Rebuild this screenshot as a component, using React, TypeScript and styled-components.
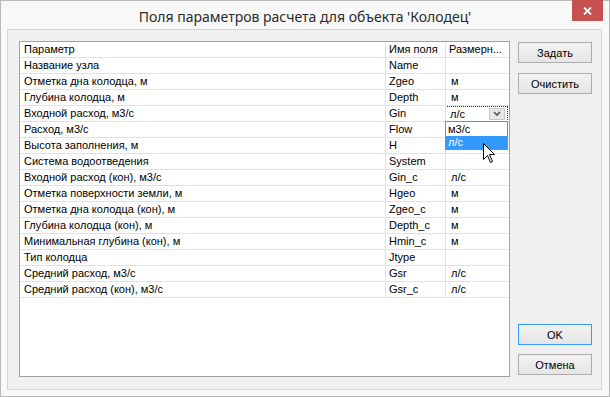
import React from "react";
import styled, { createGlobalStyle } from "styled-components";

const Global = createGlobalStyle`
  html, body { margin: 0; padding: 0; background: #ffffff; }
  body { font-family: "Liberation Sans", Arial, sans-serif; }
`;

const Window = styled.div`
  position: relative;
  width: 610px;
  height: 397px;
  box-sizing: border-box;
  border: 1px solid #b9b9b9;
  background: #f8f8f8;
  display: flex;
  flex-direction: column;
`;

const TitleBar = styled.div`
  height: 28px;
  display: flex;
  align-items: center;
  justify-content: center;
  position: relative;
`;

const Title = styled.div`
  font-family: "Noto Sans", "Open Sans", sans-serif;
  font-size: 14px;
  color: #2a2a2a;
  margin-top: 2px;
`;

const CloseButton = styled.div`
  position: absolute;
  right: 6px;
  top: -1px;
  width: 31px;
  height: 21px;
  background: #c75050;
  color: #fff;
  display: flex;
  align-items: center;
  justify-content: center;
`;

const Client = styled.div`
  margin: 0 7px 6px 6px;
  flex: 1;
  border: 1px solid #d6d6d6;
  background: #f0f0f0;
  display: flex;
  padding: 11px 9px 12px 11px;
  gap: 8px;
`;

const Grid = styled.div`
  position: relative;
  width: 491px;
  box-sizing: border-box;
  border: 1px solid #a0a0a0;
  background: #fff;
  display: flex;
  flex-direction: column;
`;

const Row = styled.div<{ $header?: boolean }>`
  display: grid;
  grid-template-columns: 366px 60px 1fr;
  height: 16px;
  box-sizing: border-box;
  border-bottom: 1px solid #e2e2e2;
  font-size: 11px;
  color: #000;
`;

const Cell = styled.div<{ $pad: number; $last?: boolean }>`
  padding-left: ${(p) => p.$pad}px;
  border-right: ${(p) => (p.$last ? "none" : "1px solid #e2e2e2")};
  line-height: 15px;
  white-space: nowrap;
  overflow: hidden;
  text-overflow: ellipsis;
  position: relative;
`;

const ComboCell = styled.div`
  position: absolute;
  left: -1px;
  right: 1px;
  top: 0;
  bottom: -1px;
  border: 1px dotted #333;
  display: flex;
  align-items: center;
  padding-left: 4px;
  box-sizing: border-box;
`;

const ComboArrow = styled.div`
  position: absolute;
  right: 2px;
  top: 1px;
  width: 16px;
  height: 12px;
  background: #e6e6e6;
  border: 1px solid #c8c8c8;
  box-sizing: border-box;
  display: flex;
  align-items: center;
  justify-content: center;
`;

const DropList = styled.div`
  position: absolute;
  left: 425px;
  top: 79px;
  width: 63px;
  height: 29px;
  box-sizing: border-box;
  border: 1px solid #8a8a8a;
  background: #fff;
  font-size: 11px;
  display: flex;
  flex-direction: column;
  padding-top: 1px;
`;

const DropItem = styled.div<{ $selected?: boolean }>`
  height: 13px;
  line-height: 13px;
  padding-left: 2px;
  background: ${(p) => (p.$selected ? "#3399ff" : "transparent")};
  color: ${(p) => (p.$selected ? "#fff" : "#000")};
`;

const Cursor = styled.svg`
  position: absolute;
  left: 463px;
  top: 101px;
`;

const Buttons = styled.div`
  width: 74px;
  display: flex;
  flex-direction: column;
  justify-content: space-between;
  padding-top: 1px;
  padding-bottom: 2px;
`;

const Group = styled.div<{ $gap: number }>`
  display: flex;
  flex-direction: column;
  gap: ${(p) => p.$gap}px;
`;

const Button = styled.div<{ $default?: boolean }>`
  height: 21px;
  box-sizing: border-box;
  border: 1px solid ${(p) => (p.$default ? "#3399ff" : "#adadad")};
  background: linear-gradient(#f2f2f2, #e5e5e5);
  font-size: 11px;
  display: flex;
  align-items: center;
  justify-content: center;
  color: #000;
`;

type R = [string, string, string];
const rows: R[] = [
  ["Название узла", "Name", ""],
  ["Отметка дна колодца, м", "Zgeo", "м"],
  ["Глубина колодца, м", "Depth", "м"],
  ["Входной расход, м3/с", "Gin", "л/с"],
  ["Расход, м3/с", "Flow", "м3/с"],
  ["Высота заполнения, м", "H", ""],
  ["Система водоотведения", "System", ""],
  ["Входной расход (кон), м3/с", "Gin_c", "л/с"],
  ["Отметка поверхности земли, м", "Hgeo", "м"],
  ["Отметка дна колодца (кон), м", "Zgeo_c", "м"],
  ["Глубина колодца (кон), м", "Depth_c", "м"],
  ["Минимальная глубина (кон), м", "Hmin_c", "м"],
  ["Тип колодца", "Jtype", ""],
  ["Средний расход, м3/с", "Gsr", "л/с"],
  ["Средний расход (кон), м3/с", "Gsr_c", "л/с"],
];

export default function App() {
  return (
    <>
      <Global />
      <Window>
        <TitleBar>
          <Title>Поля параметров расчета для объекта 'Колодец'</Title>
          <CloseButton>
            <svg width="9" height="8" viewBox="0 0 9 8">
              <path d="M1 0.5 L8 7.5 M8 0.5 L1 7.5" stroke="#fff" strokeWidth="1.8" />
            </svg>
          </CloseButton>
        </TitleBar>
        <Client>
          <Grid>
            <Row $header>
              <Cell $pad={4}>Параметр</Cell>
              <Cell $pad={3}>Имя поля</Cell>
              <Cell $pad={3} $last>Размерн...</Cell>
            </Row>
            {rows.map((r, i) => (
              <Row key={i}>
                <Cell $pad={4}>{r[0]}</Cell>
                <Cell $pad={3}>{r[1]}</Cell>
                <Cell $pad={5} $last>
                  {i === 3 ? (
                    <ComboCell>
                      л/с
                      <ComboArrow>
                        <svg width="8" height="6" viewBox="0 0 8 6">
                          <path d="M1 1 L4 4 L7 1" stroke="#555" strokeWidth="1.6" fill="none" />
                        </svg>
                      </ComboArrow>
                    </ComboCell>
                  ) : i === 4 ? (
                    ""
                  ) : (
                    r[2]
                  )}
                </Cell>
              </Row>
            ))}
            <DropList>
              <DropItem>м3/с</DropItem>
              <DropItem $selected>л/с</DropItem>
            </DropList>
            <Cursor width="13" height="21" viewBox="0 0 13 21">
              <path
                d="M0.5 0.5 L0.5 16.5 L4.5 12.5 L7.5 19.5 L9.5 18.5 L6.5 11.5 L11.5 11.5 Z"
                fill="#fff"
                stroke="#000"
                strokeWidth="1"
              />
            </Cursor>
          </Grid>
          <Buttons>
            <Group $gap={10}>
              <Button>Задать</Button>
              <Button>Очистить</Button>
            </Group>
            <Group $gap={9}>
              <Button $default>OK</Button>
              <Button>Отмена</Button>
            </Group>
          </Buttons>
        </Client>
      </Window>
    </>
  );
}
